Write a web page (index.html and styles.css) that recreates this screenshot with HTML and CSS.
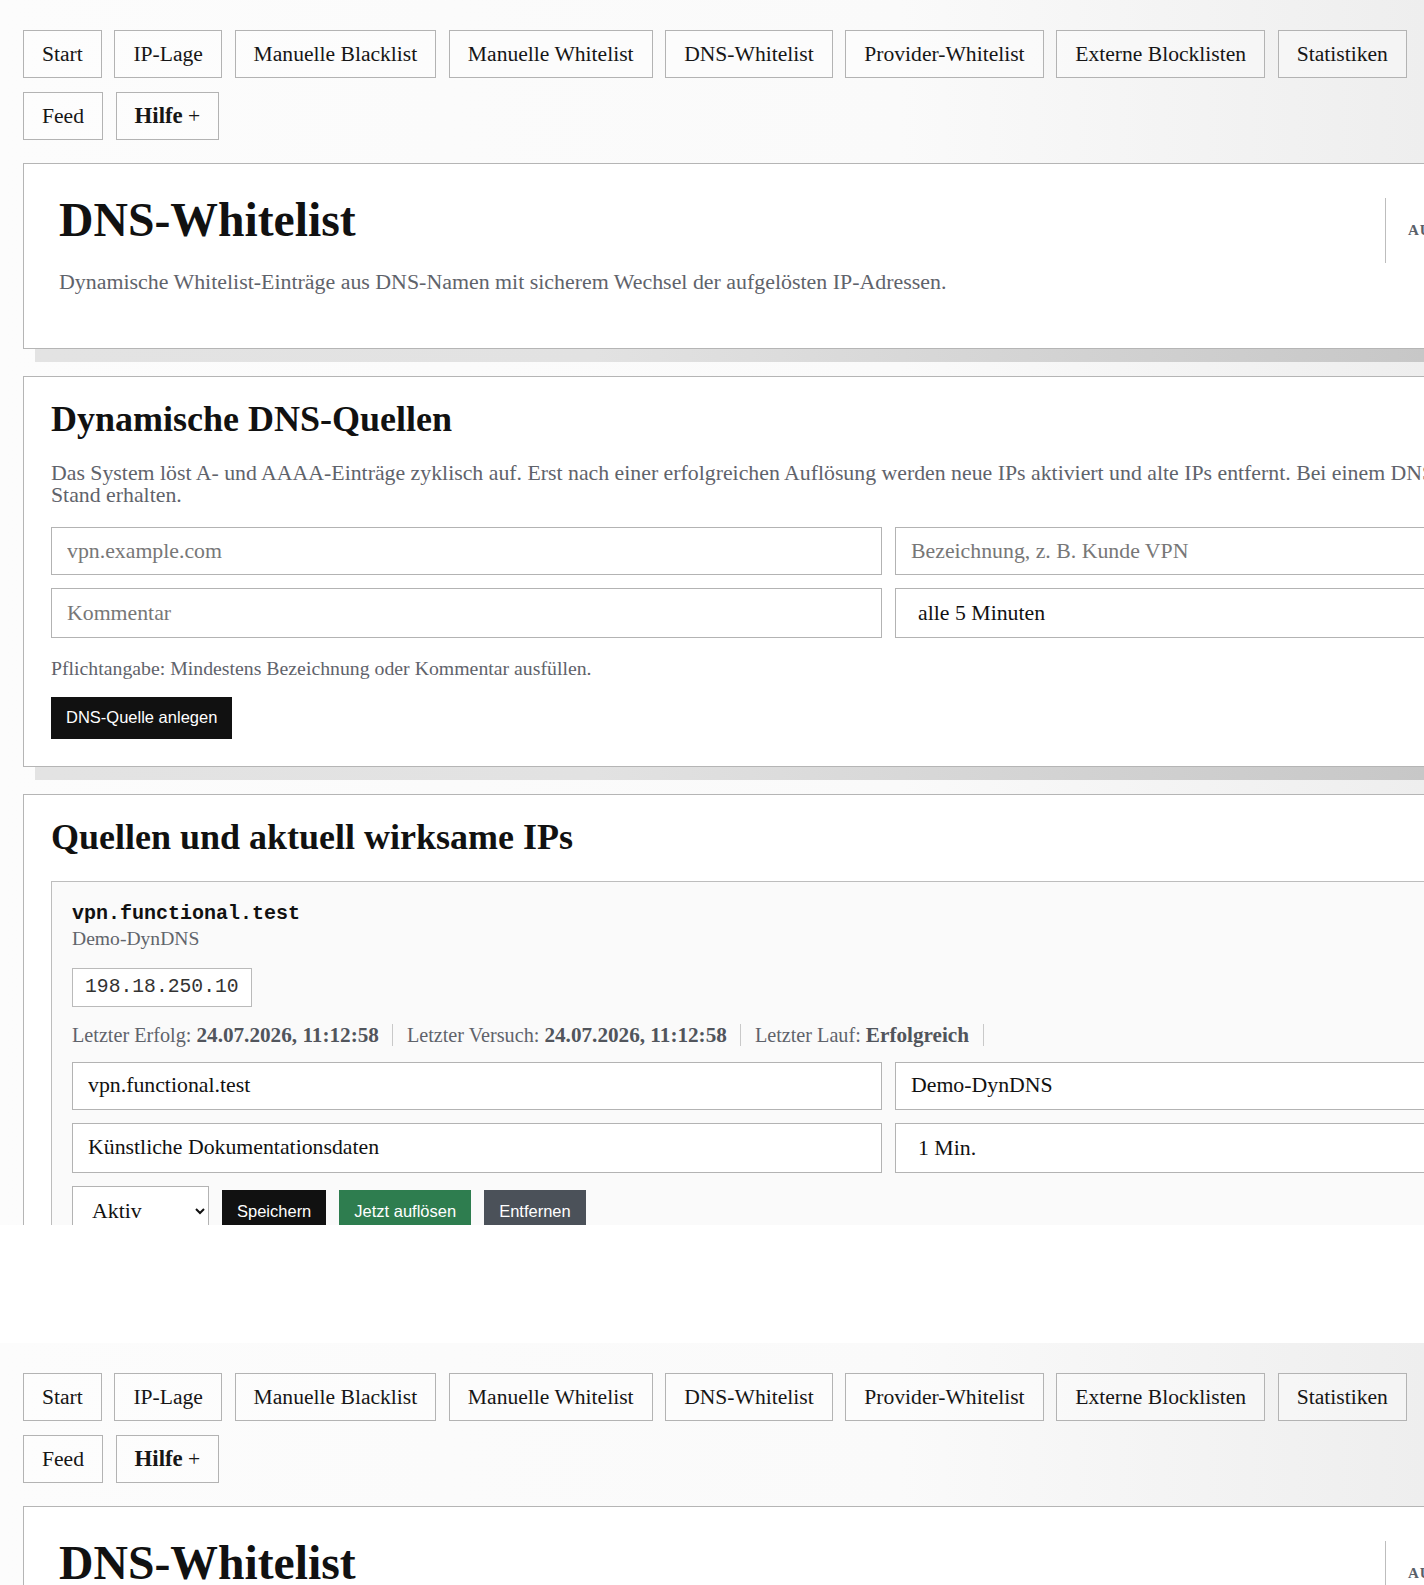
FILE: index.html
```html
<!DOCTYPE html>
<html lang="de">
<head>
<meta charset="utf-8">
<title>DNS-Whitelist</title>
<link rel="stylesheet" href="styles.css">
</head>
<body>
<div class="frame frame--top">
  <div class="page">
    <nav class="nav">
      <a class="nav-btn" href="#">Start</a>
      <a class="nav-btn" href="#">IP-Lage</a>
      <a class="nav-btn" href="#">Manuelle Blacklist</a>
      <a class="nav-btn" href="#">Manuelle Whitelist</a>
      <a class="nav-btn" href="#">DNS-Whitelist</a>
      <a class="nav-btn" href="#">Provider-Whitelist</a>
      <a class="nav-btn" href="#">Externe Blocklisten</a>
      <a class="nav-btn" href="#">Statistiken</a>
      <a class="nav-btn" href="#">Feed</a>
      <a class="nav-btn" href="#"><b>Hilfe</b> +</a>
    </nav>
    <main class="main">
      <section class="card hero">
        <div class="hero-text">
          <h1>DNS-Whitelist</h1>
          <p class="sub">Dynamische Whitelist-Einträge aus DNS-Namen mit sicherem Wechsel der aufgelösten IP-Adressen.</p>
        </div>
        <aside class="hero-aside"><span class="aside-label">AUTOMATISCHE AUFLÖSUNG</span></aside>
      </section>

      <section class="card">
        <h2>Dynamische DNS-Quellen</h2>
        <p class="lead">Das System löst A- und AAAA-Einträge zyklisch auf. Erst nach einer erfolgreichen Auflösung werden neue IPs aktiviert und alte IPs entfernt. Bei einem DNS-Fehler bleibt der letzte bekannte Stand erhalten.</p>
        <div class="grid2 grid-create">
          <input class="field" type="text" placeholder="vpn.example.com">
          <input class="field" type="text" placeholder="Bezeichnung, z. B. Kunde VPN">
          <input class="field field--tall" type="text" placeholder="Kommentar">
          <select class="field field--tall">
            <option>alle 5 Minuten</option>
            <option>1 Min.</option>
          </select>
        </div>
        <p class="hint">Pflichtangabe: Mindestens Bezeichnung oder Kommentar ausfüllen.</p>
        <button class="btn btn-create" type="button">DNS-Quelle anlegen</button>
      </section>

      <section class="card">
        <h2>Quellen und aktuell wirksame IPs</h2>
        <div class="item">
          <div class="item-title">vpn.functional.test</div>
          <div class="item-label">Demo-DynDNS</div>
          <div class="ip-list"><span class="ip">198.18.250.10</span></div>
          <div class="meta"><span class="meta-item">Letzter Erfolg: <b>24.07.2026, 11:12:58</b></span><span class="meta-item">Letzter Versuch: <b>24.07.2026, 11:12:58</b></span><span class="meta-item">Letzter Lauf: <b>Erfolgreich</b></span></div>
          <div class="grid2 grid-edit">
            <input class="field" type="text" value="vpn.functional.test">
            <input class="field" type="text" value="Demo-DynDNS">
            <input class="field field--tall" type="text" value="Künstliche Dokumentationsdaten">
            <select class="field field--tall">
              <option>1 Min.</option>
              <option>alle 5 Minuten</option>
            </select>
          </div>
          <div class="actions">
            <select class="field field--tall status">
              <option>Aktiv</option>
              <option>Inaktiv</option>
            </select>
            <button class="btn" type="button">Speichern</button>
            <button class="btn btn-green" type="button">Jetzt auflösen</button>
            <button class="btn btn-gray" type="button">Entfernen</button>
          </div>
        </div>
      </section>
    </main>
  </div>
</div>

<div class="frame frame--bottom">
  <div class="page">
    <nav class="nav">
      <a class="nav-btn" href="#">Start</a>
      <a class="nav-btn" href="#">IP-Lage</a>
      <a class="nav-btn" href="#">Manuelle Blacklist</a>
      <a class="nav-btn" href="#">Manuelle Whitelist</a>
      <a class="nav-btn" href="#">DNS-Whitelist</a>
      <a class="nav-btn" href="#">Provider-Whitelist</a>
      <a class="nav-btn" href="#">Externe Blocklisten</a>
      <a class="nav-btn" href="#">Statistiken</a>
      <a class="nav-btn" href="#">Feed</a>
      <a class="nav-btn" href="#"><b>Hilfe</b> +</a>
    </nav>
    <main class="main">
      <section class="card hero">
        <div class="hero-text">
          <h1>DNS-Whitelist</h1>
          <p class="sub">Dynamische Whitelist-Einträge aus DNS-Namen mit sicherem Wechsel der aufgelösten IP-Adressen.</p>
        </div>
        <aside class="hero-aside"><span class="aside-label">AUTOMATISCHE AUFLÖSUNG</span></aside>
      </section>
    </main>
  </div>
</div>
</body>
</html>
```

FILE: styles.css
```css
* { box-sizing: border-box; }

html, body {
  margin: 0;
  padding: 0;
}

body {
  width: 1424px;
  overflow: hidden;
  background: #ffffff;
  font-family: "Liberation Serif", "Times New Roman", serif;
  color: #141414;
}

.frame {
  position: relative;
  z-index: 0;
  overflow: hidden;
  background: linear-gradient(90deg, #fcfcfc 0, #fafafa 900px, #eeeeee 1424px);
}

.frame--top {
  height: 1224.5px;
  margin-bottom: 118.5px;
}

.frame--bottom {
  height: 242px;
}

.page {
  padding: 30px 0 0 23px;
}

/* navigation */
.nav {
  display: flex;
  flex-wrap: wrap;
  gap: 14px 12.6px;
}

.nav-btn {
  display: block;
  height: 48px;
  padding: 0 18px;
  line-height: 46px;
  border: 1px solid #b3b3b3;
  background: rgba(255, 255, 255, 0.35);
  font-size: 21.6px;
  color: #161616;
  text-decoration: none;
  white-space: nowrap;
}

.nav-btn b { font-weight: 700; font-size: 22.8px; }

/* cards */
.main {
  width: 1731px;
  margin-top: 23px;
}

.card {
  position: relative;
  background: #ffffff;
  border: 1px solid #b5b5b5;
  padding: 21.4px 27px 27px;
}

.card + .card { margin-top: 27px; }

.card::after {
  content: "";
  position: absolute;
  left: 11px;
  top: 14px;
  right: -13px;
  bottom: -14.3px;
  z-index: -1;
  background: linear-gradient(90deg, #e3e3e3 0, #e2e2e2 560px, #c7c7c7 1390px, #bababa 1731px);
}

.card h2 {
  margin: 0;
  font-size: 36px;
  line-height: 42px;
  font-weight: 700;
  color: #111111;
}

/* hero */
.hero {
  display: flex;
  justify-content: space-between;
  align-items: flex-start;
  padding: 30px 35px 55.4px;
}

.hero-text { flex: 1 1 auto; min-width: 0; }

.hero h1 {
  margin: 0;
  font-size: 47.7px;
  line-height: 52px;
  font-weight: 700;
  color: #111111;
}

.sub {
  margin: 24.5px 0 0;
  font-size: 21.9px;
  line-height: 21.8px;
  color: #5f636b;
}

.hero-aside {
  flex: none;
  width: 333px;
  height: 65px;
  margin-top: 4px;
  padding-left: 22px;
  border-left: 1px solid #bdbdbd;
  display: flex;
  align-items: center;
}

.aside-label {
  font-size: 15px;
  font-weight: 700;
  letter-spacing: 0.06em;
  color: #596069;
  white-space: nowrap;
}

/* forms */
.lead {
  margin: 23.3px 0 0;
  font-size: 21.8px;
  line-height: 21.8px;
  color: #5f636b;
}

.grid2 {
  display: grid;
  grid-template-columns: 1fr 1fr;
  gap: 13px;
}

.grid-create { margin-top: 20.3px; }
.grid-edit { margin-top: 14.6px; }

.field {
  display: block;
  width: 100%;
  height: 48px;
  margin: 0;
  padding: 0 15px;
  border: 1px solid #b3b3b3;
  border-radius: 0;
  background: #ffffff;
  font-family: "Liberation Serif", "Times New Roman", serif;
  font-size: 21.8px;
  color: #111111;
  outline: none;
}

.field::placeholder { color: #777777; }

.field--tall { height: 50px; }

select.field { padding-left: 18px; }

.hint {
  margin: 19px 0 0;
  font-size: 19.8px;
  line-height: 23.5px;
  color: #5f636b;
}

.btn {
  height: 42px;
  margin: 0;
  padding: 0 15px;
  border: 0;
  border-radius: 0;
  background: #111111;
  color: #ffffff;
  font-family: "Liberation Sans", Arial, sans-serif;
  font-size: 16.5px;
  white-space: nowrap;
}

.btn-create {
  display: block;
  margin-top: 16.2px;
}

.btn-green { background: #2e7d4f; }
.btn-gray { background: #4b5159; }

/* entries */
.item {
  margin-top: 23px;
  border: 1px solid #bdbdbd;
  background: #fafafa;
  padding: 20px 20px 20px;
}

.item-title {
  font-family: "Liberation Mono", "Courier New", monospace;
  font-weight: 700;
  font-size: 20px;
  line-height: 24px;
  color: #111111;
}

.item-label {
  margin-top: 1px;
  font-size: 19.6px;
  line-height: 24px;
  color: #60646b;
}

.ip-list {
  display: flex;
  gap: 10px;
  margin-top: 16.4px;
}

.ip {
  display: inline-flex;
  align-items: center;
  height: 39.4px;
  padding: 0 12px;
  border: 1px solid #bababa;
  background: #ffffff;
  font-family: "Liberation Mono", "Courier New", monospace;
  font-size: 19.7px;
  color: #333333;
}

.meta {
  margin-top: 15.8px;
  font-size: 20.2px;
  line-height: 24px;
  color: #5f636b;
}

.meta-item {
  padding: 0 13.5px;
  border-right: 1px solid #c9c9c9;
}

.meta-item:first-child { padding-left: 0; }

.meta b {
  font-weight: 700;
  font-size: 21.2px;
  color: #51555c;
}

.actions {
  display: flex;
  align-items: center;
  gap: 13px;
  margin-top: 13.5px;
}

.actions .status {
  width: 137px;
  padding-left: 15px;
}
```
